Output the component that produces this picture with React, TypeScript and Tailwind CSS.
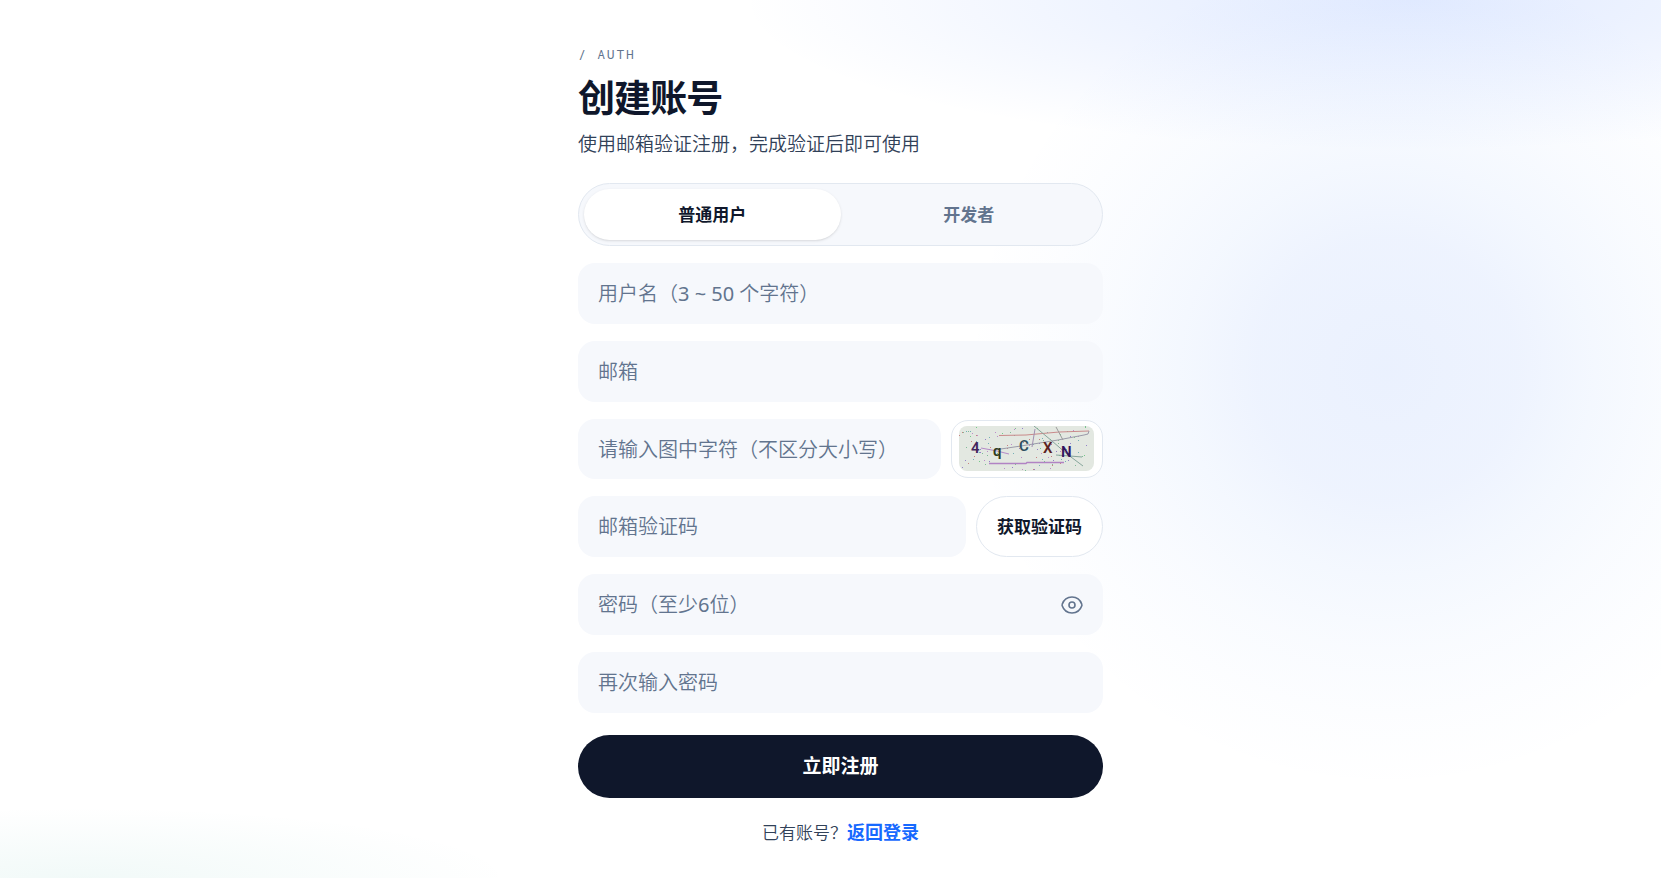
import { useState } from "react";
import { EyeOff } from "lucide-react";
import { clsx } from "clsx";

type Role = "user" | "developer";

const ROLES: { id: Role; label: string }[] = [
  { id: "user", label: "普通用户" },
  { id: "developer", label: "开发者" },
];

const FIELD =
  "w-full min-w-0 rounded-[17px] bg-[#f6f8fc] px-5 font-['Noto_Sans','Noto_Sans_CJK_SC_DemiLight','Noto_Sans_CJK_SC',sans-serif] text-xl text-slate-900 placeholder:text-slate-500 outline-none focus:ring-2 focus:ring-blue-500/30";

// 噪点颜色
const NOISE_COLORS = ["#5fae7d", "#7a5fc0", "#c0605f", "#4f9fa8", "#4fc06a", "#b06fc0"];

// 验证码噪点，固定种子保证每次渲染一致
const NOISE = Array.from({ length: 110 }, (_, i) => ({
  x: (i * 53 + ((i * i) % 29) * 7) % 134,
  y: (i * 17 + ((i * i) % 13) * 5) % 45,
  color: NOISE_COLORS[i % NOISE_COLORS.length],
}));

const CAPTCHA_CHARS = [
  { char: "4", x: 12, y: 27, color: "#42245c" },
  { char: "q", x: 34, y: 30, color: "#2f3a20" },
  { char: "C", x: 60, y: 25, color: "#2f4f60" },
  { char: "X", x: 84, y: 27, color: "#5c2222" },
  { char: "N", x: 102, y: 31, color: "#32145c" },
];

function CaptchaImage() {
  return (
    <svg viewBox="0 0 135 45" className="h-[45px] w-[135px] rounded-lg bg-[#e3e8e1]" aria-hidden="true">
      {NOISE.map((dot, i) => (
        <rect key={i} x={dot.x} y={dot.y} width="1" height="1" fill={dot.color} opacity="0.75" />
      ))}
      <g fill="none" strokeWidth="1">
        <path d="M40 9.5 67 9 100 6 130 5" stroke="#c98a8a" />
        <path d="M130 5l-1 3-4 1-26 5-37 6-27 4" stroke="#9a9aa8" />
        <path d="M22 22l16 3 12 3" stroke="#b58ac8" />
        <path d="M30 37.5h37l1-1h37" stroke="#b183c4" strokeWidth="1.4" />
        <path d="M75 0l18 15 15 13 16 12" stroke="#86a59b" />
        <path d="M76 3l-3 18" stroke="#a08fb0" />
        <path d="M97 1l7 13" stroke="#9a9a9a" />
        <path d="M97 29l14 1 12 1" stroke="#86a59b" />
      </g>
      {CAPTCHA_CHARS.map((c) => (
        <text
          key={c.char}
          x={c.x}
          y={c.y}
          fill={c.color}
          className="font-['Roboto',sans-serif] text-[15px] font-semibold"
        >
          {c.char}
        </text>
      ))}
    </svg>
  );
}

export default function App() {
  const [role, setRole] = useState<Role>("user");
  const [showPassword, setShowPassword] = useState(false);

  return (
    <main className="flex min-h-screen justify-center bg-white bg-[radial-gradient(ellipse_670px_150px_at_85%_0%,rgba(47,111,255,0.14),transparent),radial-gradient(circle_at_83.5%_42%,rgba(37,105,245,0.095),rgba(37,105,245,0.08)_130px,rgba(59,130,246,0.06)_200px,rgba(59,130,246,0.03)_280px,rgba(59,130,246,0.01)_360px,transparent_420px),radial-gradient(ellipse_430px_72px_at_5%_100%,rgba(20,160,140,0.06),transparent)] pt-[46px] pb-8 pl-5 font-['Noto_Sans','Noto_Sans_CJK_SC',sans-serif]">
      <div className="w-full max-w-[525px]">
        <p className="font-['Roboto_Mono','DejaVu_Sans_Mono',monospace] text-[13px] leading-4 tracking-[0.14em] text-slate-500">
          / AUTH
        </p>
        <h1 className="mt-3 text-[37px] leading-[48px] font-bold tracking-tight text-slate-900">创建账号</h1>
        <p className="mt-2 text-[19px] leading-7 font-[350] text-slate-700">使用邮箱验证注册，完成验证后即可使用</p>

        {/* 角色切换 */}
        <div className="mt-[25px] flex h-[63px] rounded-full border border-slate-200 bg-[#f6f8fc] p-[5px]">
          {ROLES.map((item) => (
            <button
              key={item.id}
              type="button"
              aria-pressed={role === item.id}
              onClick={() => setRole(item.id)}
              className={clsx(
                "flex-1 rounded-full text-[17px] font-semibold",
                role === item.id ? "bg-white text-slate-900 shadow-sm" : "text-slate-500"
              )}
            >
              {item.label}
            </button>
          ))}
        </div>

        <form className="mt-[17px] flex flex-col gap-[17px]" onSubmit={(e) => e.preventDefault()}>
          <input className={clsx(FIELD, "h-[61px]")} type="text" aria-label="用户名" placeholder="用户名（3 ~ 50 个字符）" />
          <input className={clsx(FIELD, "h-[61px]")} type="email" aria-label="邮箱" placeholder="邮箱" />

          {/* 图形验证码 */}
          <div className="flex items-center gap-[10px]">
            <input
              className={clsx(FIELD, "h-[60px]")}
              type="text"
              aria-label="图形验证码"
              placeholder="请输入图中字符（不区分大小写）"
            />
            <button
              type="button"
              aria-label="刷新验证码"
              className="flex h-[58px] w-[152px] shrink-0 items-start rounded-[17px] border border-slate-200 bg-white px-[7px] py-[5px]"
            >
              <CaptchaImage />
            </button>
          </div>

          <div className="flex items-center gap-[10px]">
            <input className={clsx(FIELD, "h-[61px]")} type="text" aria-label="邮箱验证码" placeholder="邮箱验证码" />
            <button
              type="button"
              className="h-[61px] shrink-0 rounded-full border border-slate-200 bg-white px-5 text-[17px] font-semibold text-slate-900"
            >
              获取验证码
            </button>
          </div>

          <div className="relative">
            <input
              className={clsx(FIELD, "h-[61px]")}
              type={showPassword ? "text" : "password"}
              aria-label="密码"
              placeholder="密码（至少6位）"
            />
            <button
              type="button"
              aria-label={showPassword ? "隐藏密码" : "显示密码"}
              onClick={() => setShowPassword(!showPassword)}
              className="absolute inset-y-0 right-5 text-slate-500"
            >
              {showPassword ? (
                <EyeOff size={22} strokeWidth={1.6} />
              ) : (
                <svg width="22" height="22" viewBox="0 0 22 22" fill="none" stroke="currentColor" strokeWidth="1.6">
                  <path d="M1.200 10.200C2.800 5.600 6.600 3 11 3s8.200 2.600 9.800 7.200q.3.800 0 1.600C19.200 16.400 15.400 19 11 19S2.800 16.400 1.200 11.800q-.3-.8 0-1.600Z" />
                  <circle cx="11" cy="11" r="3" />
                </svg>
              )}
            </button>
          </div>
          <input className={clsx(FIELD, "h-[61px]")} type="password" aria-label="确认密码" placeholder="再次输入密码" />

          <button type="submit" className="mt-[5px] h-[63px] rounded-full bg-slate-900 text-[19px] font-bold text-white">
            立即注册
          </button>
        </form>

        <p className="mt-5 text-center text-[17px] leading-7 font-[350] text-slate-700">
          已有账号？
          <a href="#login" className="text-lg font-bold text-[#1769ff]">
            返回登录
          </a>
        </p>
      </div>
    </main>
  );
}
